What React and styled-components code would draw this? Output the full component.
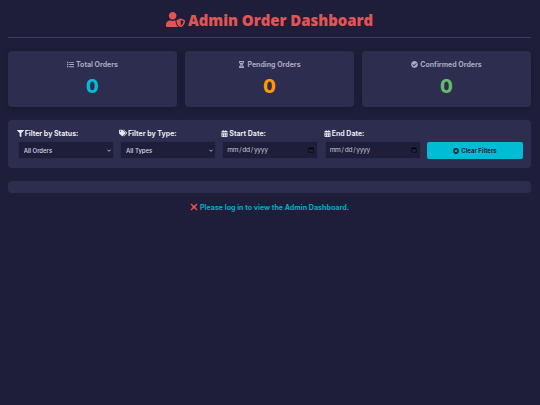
import React from 'react'
import styled, { createGlobalStyle } from 'styled-components'
import { FaUserShield, FaList, FaHourglassHalf, FaCheckCircle, FaFilter, FaTags, FaCalendarAlt, FaTimesCircle } from 'react-icons/fa'

const GlobalStyle = createGlobalStyle`
  html, body {
    margin: 0;
    padding: 0;
    background: #1e1e3a;
  }
  body {
    font-family: "Inter", "Open Sans", sans-serif;
  }
`

const chevron = "url(\"data:image/svg+xml,%3Csvg xmlns='http://www.w3.org/2000/svg' viewBox='0 0 10 6'%3E%3Cpath d='M1 1l4 4 4-4' fill='none' stroke='%23e0e0e8' stroke-width='2'/%3E%3C/svg%3E\")"

function App() {
  return (
    <Page>
      <GlobalStyle />
      <Header>
        <Title><FaUserShield size={19} />Admin Order Dashboard</Title>
      </Header>
      <Stats>
        <StatCard>
          <StatLabel><FaList size={7} />Total Orders</StatLabel>
          <StatValue color="#00bcd4">0</StatValue>
        </StatCard>
        <StatCard>
          <StatLabel><FaHourglassHalf size={7} />Pending Orders</StatLabel>
          <StatValue color="#ff9800">0</StatValue>
        </StatCard>
        <StatCard>
          <StatLabel><FaCheckCircle size={7} />Confirmed Orders</StatLabel>
          <StatValue color="#66bb6a">0</StatValue>
        </StatCard>
      </Stats>
      <Filters>
        <Field>
          <FieldLabel><FaFilter size={7} />Filter by Status:</FieldLabel>
          <Select defaultValue="all">
            <option value="all">All Orders</option>
          </Select>
        </Field>
        <Field>
          <FieldLabel><FaTags size={8} />Filter by Type:</FieldLabel>
          <Select defaultValue="all">
            <option value="all">All Types</option>
          </Select>
        </Field>
        <Field>
          <FieldLabel><FaCalendarAlt size={7} />Start Date:</FieldLabel>
          <DateInput type="date" />
        </Field>
        <Field>
          <FieldLabel><FaCalendarAlt size={7} />End Date:</FieldLabel>
          <DateInput type="date" />
        </Field>
        <ClearButton><FaTimesCircle size={6} />Clear Filters</ClearButton>
      </Filters>
      <EmptyBar />
      <Notice>
        <Cross viewBox="0 0 16 16">
          <path d="M1 2.500 2.500 1 8 5.500 13.500 1 15 2.500 10.500 8 15 13.500 13.500 15 8 10.500 2.500 15 1 13.500 5.500 8z" fill="#e8504f" />
        </Cross>
        Please log in to view the Admin Dashboard.
      </Notice>
    </Page>
  )
}

export default App

const Page = styled.div`
  box-sizing: border-box;
  width: 540px;
  height: 405px;
  padding: 0 9px 0 8px;
  overflow: hidden;
  background: #1e1e3a;
`

const Header = styled.header`
  height: 37px;
  border-bottom: 1px solid #3f3f63;
  display: flex;
  align-items: center;
  justify-content: center;
`

const Title = styled.h1`
  margin: 2px 0 0;
  display: flex;
  align-items: center;
  gap: 3px;
  font-family: "Open Sans", sans-serif;
  font-size: 14.900px;
  font-weight: 800;
  color: #e15554;
`

const Stats = styled.section`
  margin-top: 13px;
  display: grid;
  grid-template-columns: repeat(3, 1fr);
  gap: 8px;
`

const StatCard = styled.div`
  height: 56px;
  background: #2d2d4f;
  border-radius: 4px;
  box-shadow: 0 2px 6px rgba(0, 0, 0, 0.2);
  display: flex;
  flex-direction: column;
  align-items: center;
  padding-top: 9px;
  box-sizing: border-box;
`

const StatLabel = styled.div`
  display: flex;
  align-items: center;
  gap: 2px;
  font-size: 7px;
  font-weight: 700;
  line-height: 9px;
  color: #a9a9c2;
`

const StatValue = styled.div`
  margin-top: 5px;
  font-size: 18.500px;
  font-weight: 800;
  line-height: 24px;
  color: ${props => props.color};
`

const Filters = styled.section`
  margin-top: 13px;
  height: 48px;
  box-sizing: border-box;
  padding: 8px 8px 0 9.700px;
  background: #2d2d4f;
  border-radius: 4px;
  display: grid;
  grid-template-columns: repeat(5, 1fr);
  column-gap: 6.300px;
  align-items: end;
  align-content: start;
`

const Field = styled.div`
  display: flex;
  flex-direction: column;
  gap: 3px;
  min-width: 0;
`

const FieldLabel = styled.label`
  display: flex;
  align-items: center;
  gap: 1px;
  height: 10px;
  margin-left: -1px;
  font-size: 7px;
  font-weight: 700;
  color: #e8e8f0;
`

const Select = styled.select`
  box-sizing: border-box;
  width: 100%;
  height: 18px;
  padding: 0 5px;
  font-family: inherit;
  font-size: 6px;
  font-weight: 500;
  color: #d8d8e2;
  background: #1e1e3a ${chevron} no-repeat right 2px center / 4px 3px;
  border: 1px solid #2a2a4a;
  border-radius: 2px;
  outline: none;
  appearance: none;
`

const DateInput = styled.input`
  box-sizing: border-box;
  width: 100%;
  height: 18px;
  padding: 0 3px;
  font-family: inherit;
  font-size: 6.600px;
  letter-spacing: -0.300px;
  color: #c8c8d4;
  background: #1e1e3a;
  border: 1px solid #2a2a4a;
  border-radius: 2px;
  outline: none;

  &::-webkit-calendar-picker-indicator {
    width: 6px;
    height: 6px;
    margin: 0;
    padding: 0;
  }
`

const ClearButton = styled.button`
  box-sizing: border-box;
  height: 17px;
  display: flex;
  align-items: center;
  justify-content: center;
  gap: 2px;
  font-family: inherit;
  font-size: 6px;
  font-weight: 700;
  color: #1e1e3a;
  background: #00bcd4;
  border: none;
  border-radius: 2px;
`

const EmptyBar = styled.div`
  margin-top: 13px;
  height: 12px;
  background: #2d2d4f;
  border-radius: 4px;
`

const Notice = styled.p`
  margin: 9px 0 0;
  display: flex;
  align-items: center;
  justify-content: center;
  gap: 2px;
  height: 10px;
  font-size: 7.100px;
  font-weight: 700;
  color: #00acc1;
`

const Cross = styled.svg`
  width: 8px;
  height: 8px;
`
